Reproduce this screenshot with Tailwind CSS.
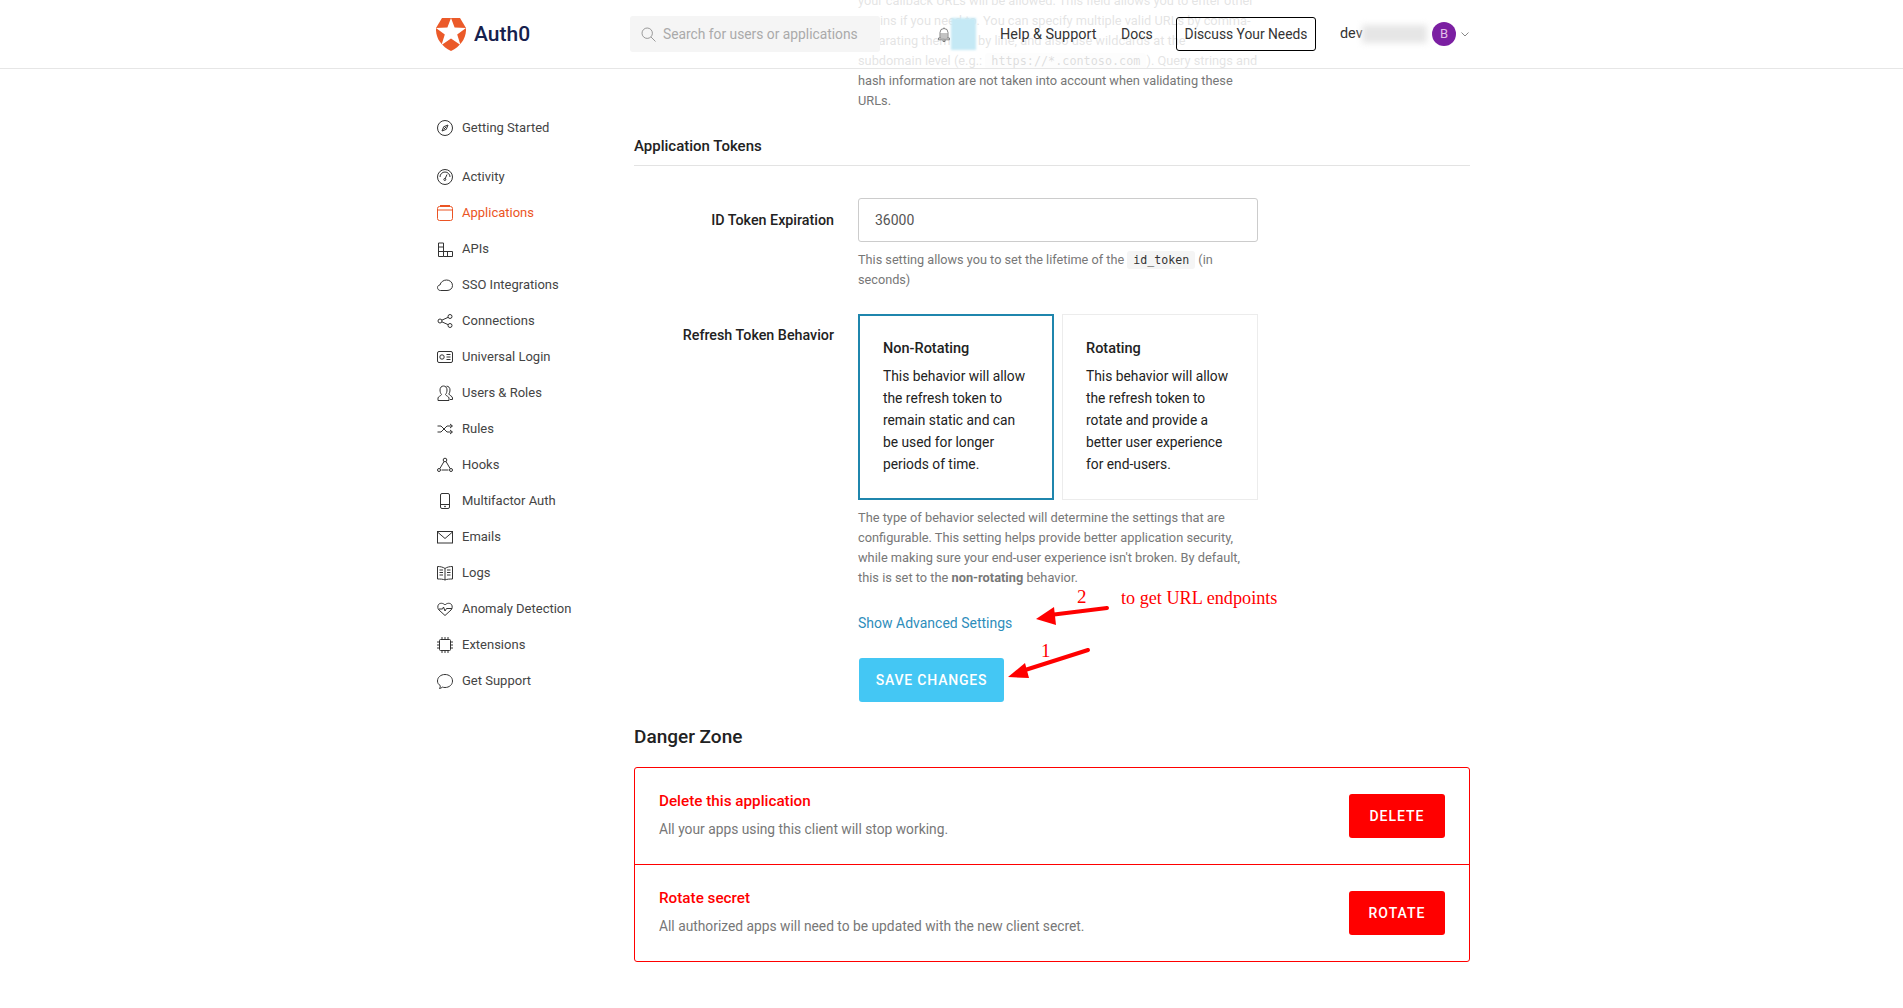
<!DOCTYPE html>
<html lang="en">
<head>
<meta charset="utf-8">
<title>Auth0</title>
<script src="https://cdn.jsdelivr.net/npm/@tailwindcss/browser@4"></script>
</head>
<body class="bg-white font-['Roboto',sans-serif] text-[14px] text-[#333]">
<div class="relative h-[1008px] w-[1903px] overflow-hidden">

  <!-- top bar, translucent over the scrolled page -->
  <header class="absolute inset-x-0 top-0 z-10 h-[69px] border-b border-[#e6e6e6] bg-white/80">
    <div class="ml-[436px] flex h-[68px] w-[1034px] items-center">
      <div class="flex w-[194px] items-center gap-[8px]">
        <svg class="h-[33px] w-[30px]" viewBox="0 0 30 33"><path fill="#eb5a29" d="M6 0H24L30 10C30.5 20 25 28 15 33C5 28-.5 20 0 10Z"/><path fill="#fff" d="M15 0 18.6 9.6 30 10 21.2 16.4 24.5 27 15 20.6 5.5 27 8.8 16.4 0 10 11.4 9.6Z"/></svg>
        <span class="text-[21px] font-medium leading-none text-[#16214d]">Auth0</span>
      </div>
      <div class="flex h-[36px] w-[250px] items-center gap-[7px] rounded-[3px] bg-[#f5f5f5] pl-[11px]">
        <svg class="h-[15px] w-[15px]" viewBox="0 0 15 15" fill="none" stroke="#999" stroke-width="1"><circle cx="6.200" cy="6.200" r="5.200"/><path d="M10 10l4.500 4.500"/></svg>
        <span class="text-[13.8px] text-[#aaa]">Search for users or applications</span>
      </div>
      <svg class="ml-[58px] h-[15px] w-[12px]" viewBox="0 0 12 15" fill="none" stroke="#555" stroke-width=".7"><path d="M2 11V5.500a4 4 0 0 1 8 0V11M.5 11h11v1.800H.5zM2.500 7h7M2.500 9h7M5 13v1.500h2V13M6 .5v1"/></svg>
      <div class="ml-[1px] h-[32px] w-[25px] bg-[#c5e9f5] blur-[1px]"></div>
      <span class="ml-[24px] w-[97px] pt-[1px] text-[14.4px] whitespace-nowrap text-[#333]">Help &amp; Support</span>
      <span class="ml-[24px] w-[32px] pt-[1px] text-[14px] text-[#333]">Docs</span>
      <span class="ml-[23px] flex h-[34px] w-[140px] items-center justify-center rounded-[3px] border border-black text-[13.8px] text-[#333]">Discuss Your Needs</span>
      <span class="ml-[24px] w-[24px] text-[14.4px] text-[#333]">dev</span>
      <div class="-ml-[2px] h-[18px] w-[65px] bg-[#e6e6e6] blur-[3px]"></div>
      <div class="ml-[5px] flex h-[24px] w-[24px] items-center justify-center rounded-full bg-[#7b1fa2] text-[13px] text-[#e1bee7]">B</div>
      <svg class="ml-[5px] h-[5px] w-[8px]" viewBox="0 0 8 5" fill="none" stroke="#888"><path d="M.5.5 4 4 7.500.5"/></svg>
    </div>
  </header>

  <div class="ml-[436px] flex w-[1034px] items-start">
    <!-- sidebar -->
    <nav class="w-[198px] shrink-0 pt-[110px] pl-[1px] text-[13px] text-[#444]">
      <a class="flex h-[36px] items-center gap-[9px]">
        <svg class="h-[16px] w-[16px] shrink-0" viewBox="0 0 16 16" fill="none" stroke="#333"><circle cx="8" cy="8" r="7.500"/><path d="M11 5 9.300 9.300 5 11 6.700 6.700ZM6.700 9.300l2.600-2.600"/></svg>
        <span>Getting Started</span>
      </a>
      <a class="mt-[13px] flex h-[36px] items-center gap-[9px]">
        <svg class="h-[16px] w-[16px] shrink-0" viewBox="0 0 16 16" fill="none" stroke="#333"><circle cx="8" cy="8" r="7.500"/><path d="M3 8a5 5 0 0 1 10 0M10 5.500 8 10"/><circle cx="7.800" cy="10.500" r="1"/></svg>
        <span>Activity</span>
      </a>
      <a class="flex h-[36px] items-center gap-[9px] text-[#eb5424]">
        <svg class="h-[16px] w-[16px] shrink-0" viewBox="0 0 16 16" fill="none" stroke="#eb5424"><rect x=".5" y="1.500" width="15" height="14" rx="2"/><path d="M.5 5h15M3 .5h10"/></svg>
        <span>Applications</span>
      </a>
      <a class="flex h-[36px] items-center gap-[9px]">
        <svg class="h-[16px] w-[16px] shrink-0" viewBox="0 0 16 16" fill="none" stroke="#333"><path d="M1.500 15.500V2h5v13.500zM1.500 6h5M1.500 10.500h14v5h-9M10.500 10.500v5"/></svg>
        <span>APIs</span>
      </a>
      <a class="flex h-[36px] items-center gap-[9px]">
        <svg class="h-[16px] w-[16px] shrink-0" viewBox="0 0 16 16" fill="none" stroke="#333"><path d="M3.500 13.500C1.500 13.500.5 12 .5 10.500S1.800 8 3 8C3.500 5 6.500 3 9.500 3c3 0 6 2 6 5.500 0 3-2.500 5-5.500 5z"/></svg>
        <span>SSO Integrations</span>
      </a>
      <a class="flex h-[36px] items-center gap-[9px]">
        <svg class="h-[16px] w-[16px] shrink-0" viewBox="0 0 16 16" fill="none" stroke="#333"><circle cx="3" cy="8" r="2"/><circle cx="13" cy="3.500" r="2"/><circle cx="13" cy="12.500" r="2"/><path d="M4.800 7.200 11.200 4.300M4.800 8.800 11.200 11.700"/></svg>
        <span>Connections</span>
      </a>
      <a class="flex h-[36px] items-center gap-[9px]">
        <svg class="h-[16px] w-[16px] shrink-0" viewBox="0 0 16 16" fill="none" stroke="#333"><rect x=".5" y="2.500" width="15" height="11" rx="1.500"/><circle cx="5" cy="8" r="2.200"/><path d="M9.500 5.500h4M9.500 8h4M9.500 10.500h4"/></svg>
        <span>Universal Login</span>
      </a>
      <a class="flex h-[36px] items-center gap-[9px]">
        <svg class="h-[16px] w-[16px] shrink-0" viewBox="0 0 16 16" fill="none" stroke="#333"><path d="M1 15.500v-2.500c0-1.500 3-2 3.500-3.500C3.500 8.500 3 6.500 3 5c0-2.500 1.500-4 3.500-4S10 2.500 10 5c0 1.500-.5 3.500-1.500 4.500.5 1.500 3.500 2 3.500 3.500v2.500zM9.500 1.200c2 0 3.500 1.300 3.500 3.800 0 1.500-.3 3-1.200 4 .5 1.500 3.700 2 3.700 4v1.500h-2.500"/></svg>
        <span>Users &amp; Roles</span>
      </a>
      <a class="flex h-[36px] items-center gap-[9px]">
        <svg class="h-[16px] w-[16px] shrink-0" viewBox="0 0 16 16" fill="none" stroke="#333"><path d="M.5 5H4l6 6h5M.5 11H4l6-6h5M13 3l2.500 2L13 7M13 9l2.500 2L13 13"/></svg>
        <span>Rules</span>
      </a>
      <a class="flex h-[36px] items-center gap-[9px]">
        <svg class="h-[16px] w-[16px] shrink-0" viewBox="0 0 16 16" fill="none" stroke="#333"><circle cx="8" cy="3" r="1.800"/><circle cx="2" cy="13" r="1.500"/><circle cx="14" cy="13" r="1.500"/><path d="M7 4.500 2.800 11.700M9 4.500l4.200 7.200M4.500 13h7"/></svg>
        <span>Hooks</span>
      </a>
      <a class="flex h-[36px] items-center gap-[9px]">
        <svg class="h-[16px] w-[16px] shrink-0" viewBox="0 0 16 16" fill="none" stroke="#333"><rect x="3.500" y=".5" width="9" height="15" rx="1.500"/><path d="M3.500 11.500h9"/><circle cx="8" cy="13.500" r=".5"/></svg>
        <span>Multifactor Auth</span>
      </a>
      <a class="flex h-[36px] items-center gap-[9px]">
        <svg class="h-[16px] w-[16px] shrink-0" viewBox="0 0 16 16" fill="none" stroke="#333"><rect x=".5" y="2.500" width="15" height="11.500"/><path d="M.5 3 8 9.500 15.500 3"/></svg>
        <span>Emails</span>
      </a>
      <a class="flex h-[36px] items-center gap-[9px]">
        <svg class="h-[16px] w-[16px] shrink-0" viewBox="0 0 16 16" fill="none" stroke="#333"><path d="M8 3.500V15M8 3.500C6 2 3 1.500.5 1.500v12.500C3 14 6 14 8 15c2-1 5-1 7.500-1V1.500C13 1.500 10 2 8 3.500ZM2.500 5H6M2.500 7.500H6M2.500 10H6M10 5h3.500M10 7.500h3.500M10 10h3.500"/></svg>
        <span>Logs</span>
      </a>
      <a class="flex h-[36px] items-center gap-[9px]">
        <svg class="h-[16px] w-[16px] shrink-0" viewBox="0 0 16 16" fill="none" stroke="#333"><path d="M8 14.500 2 9C.5 7.500.5 5 1.500 3.500 3 1.800 6 1.800 8 4c2-2.200 5-2.200 6.500-.5 1 1.500 1 4-.5 5.500ZM2 8h3.500l1-2 1.500 4 1.500-2.500H15"/></svg>
        <span>Anomaly Detection</span>
      </a>
      <a class="flex h-[36px] items-center gap-[9px]">
        <svg class="h-[16px] w-[16px] shrink-0" viewBox="0 0 16 16" fill="none" stroke="#333"><rect x="2.500" y="2.500" width="11" height="11" rx="1"/><path d="M5 0v2.500M8 0v2.500M11 0v2.500M5 13.500V16M8 13.500V16M11 13.500V16M0 5h2.500M0 8h2.500M0 11h2.500M13.500 5H16M13.500 8H16M13.500 11H16"/></svg>
        <span>Extensions</span>
      </a>
      <a class="flex h-[36px] items-center gap-[9px]">
        <svg class="h-[16px] w-[16px] shrink-0" viewBox="0 0 16 16" fill="none" stroke="#333"><path d="M2.500 15.500c.5-1 1-2 .7-3C1.500 11.500.5 10 .5 8c0-3.800 3.300-6.500 7.500-6.500s7.500 2.700 7.500 6.500-3.300 6.500-7.500 6.500c-1 0-1.700-.1-2.500-.4-.7.6-1.900 1.200-3 1.400Z"/></svg>
        <span>Get Support</span>
      </a>
    </nav>

    <!-- main column -->
    <main class="relative w-[836px] -mt-[9px]">
      <div class="ml-[224px] w-[400px] text-[12.8px] leading-[20px] whitespace-nowrap text-[#777]">
        <p>your callback URLs will be allowed. This field allows you to enter other<br>origins if you need to. You can specify multiple valid URLs by comma-<br>separating them one by line, and also use wildcards at the<br>subdomain level (e.g.: <code class="rounded-[3px] bg-[#f5f5f5] px-[6px] py-[1px] font-['DejaVu_Sans_Mono',monospace] text-[11.8px] text-[#555]">https://*.contoso.com</code>). Query strings and<br>hash information are not taken into account when validating these<br>URLs.</p>
      </div>

      <h3 class="mt-[23px] border-b border-[#e3e3e3] pb-[7px] text-[15px] font-medium leading-[24px] text-[#222]">Application Tokens</h3>

      <div class="mt-[32px] flex items-start gap-[24px]">
        <label class="w-[200px] pt-[11px] text-right text-[14.3px] font-medium leading-[22px] text-[#222]">ID Token Expiration</label>
        <div class="w-[400px]">
          <div class="flex h-[44px] items-center rounded-[3px] border border-[#ccc] px-[16px] text-[#555]">36000</div>
          <p class="mt-[8px] text-[12.7px] leading-[20px] whitespace-nowrap text-[#777]">This setting allows you to set the lifetime of the <code class="rounded-[3px] bg-[#f5f5f5] px-[6px] py-[2px] font-['DejaVu_Sans_Mono',monospace] text-[11.6px] text-[#333]">id_token</code> (in<br>seconds)</p>
        </div>
      </div>

      <div class="mt-[24px] flex items-start gap-[24px]">
        <label class="w-[200px] pt-[10px] text-right text-[14.3px] font-medium leading-[22px] text-[#222]">Refresh Token Behavior</label>
        <div class="w-[400px]">
          <div class="flex h-[186px] gap-[8px]">
            <div class="w-[196px] border-2 border-[#1f86ad] px-[23px] pt-[22px]">
              <div class="text-[14.5px] font-medium leading-[22px] text-[#222]">Non-Rotating</div>
              <p class="mt-[5px] text-[13.8px] leading-[22px] text-[#222]">This behavior will allow the refresh token to remain static and can be used for longer periods of time.</p>
            </div>
            <div class="w-[196px] border border-[#ececec] px-[23px] pt-[23px]">
              <div class="text-[14.5px] font-medium leading-[22px] text-[#222]">Rotating</div>
              <p class="mt-[5px] text-[13.8px] leading-[22px] text-[#222]">This behavior will allow the refresh token to rotate and provide a better user experience for end-users.</p>
            </div>
          </div>
          <p class="mt-[8px] text-[12.8px] leading-[20px] whitespace-nowrap text-[#777]">The type of behavior selected will determine the settings that are<br>configurable. This setting helps provide better application security,<br>while making sure your end-user experience isn't broken. By default,<br>this is set to the <b class="font-bold">non-rotating</b> behavior.</p>
          <a class="mt-[25px] block leading-[20px] text-[#2e8dbb]">Show Advanced Settings</a>
          <button class="mt-[25px] ml-[1px] block h-[44px] w-[145px] rounded-[3px] bg-[#44c7f4] text-[14px] font-medium tracking-[.8px] text-white">SAVE CHANGES</button>
        </div>
      </div>

      <h2 class="mt-[23px] text-[19px] font-medium leading-[24px] text-[#222]">Danger Zone</h2>

      <div class="mt-[18px] rounded-[3px] border border-[#f00]">
        <div class="flex h-[97px] items-center justify-between border-b border-[#f00] pr-[24px] pl-[24px]">
          <div class="pb-[3px]">
            <div class="text-[15.250px] font-medium leading-[22px] text-[#f00]">Delete this application</div>
            <div class="mt-[7px] text-[13.8px] leading-[20px] text-[#777]">All your apps using this client will stop working.</div>
          </div>
          <button class="h-[44px] w-[96px] rounded-[3px] bg-[#f00] font-medium tracking-[1px] text-white">DELETE</button>
        </div>
        <div class="flex h-[96px] items-center justify-between pr-[24px] pl-[24px]">
          <div class="pb-[3px]">
            <div class="text-[15.250px] font-medium leading-[22px] text-[#f00]">Rotate secret</div>
            <div class="mt-[7px] text-[13.8px] leading-[20px] text-[#777]">All authorized apps will need to be updated with the new client secret.</div>
          </div>
          <button class="h-[44px] w-[96px] rounded-[3px] bg-[#f00] font-medium tracking-[1px] text-white">ROTATE</button>
        </div>
      </div>
    </main>
  </div>

  <!-- hand-drawn annotations over the screenshot -->
  <svg class="absolute top-0 left-0 h-[1008px] w-[1903px]" viewBox="0 0 1903 1008" fill="none">
    <path d="M1107 608 1050 615" stroke="#f00" stroke-width="4" stroke-linecap="round"/>
    <path d="M1036 619 1054 607 1056 625Z" fill="#f00"/>
    <path d="M1088 650 1022 671" stroke="#f00" stroke-width="4" stroke-linecap="round"/>
    <path d="M1008 677 1025 663 1029 678Z" fill="#f00"/>
  </svg>
  <span class="absolute top-[586px] left-[1077px] font-['Liberation_Serif',serif] text-[19px] leading-[22px] text-[#f00]">2</span>
  <span class="absolute top-[640px] left-[1041px] font-['Liberation_Serif',serif] text-[19px] leading-[22px] text-[#f00]">1</span>
  <span class="absolute top-[587px] left-[1121px] font-['Liberation_Serif',serif] text-[18.200px] leading-[22px] text-[#f00]">to get URL endpoints</span>
</div>
</body>
</html>
